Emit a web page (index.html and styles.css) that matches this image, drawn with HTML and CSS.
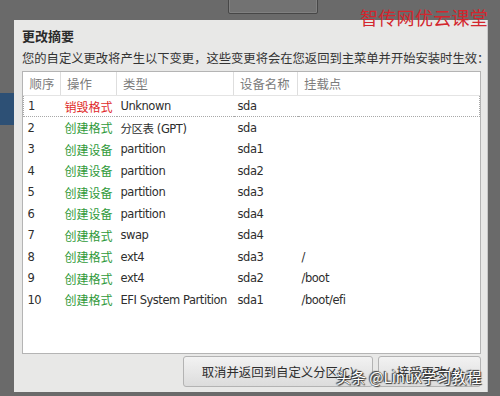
FILE: index.html
```html
<!DOCTYPE html>
<html>
   <head>
      <title>更改摘要</title>
      <link rel="stylesheet" href="styles.css">
   </head>
   <body>
   <div class="desk">
      <div class="stub"></div>
      <div class="side"></div>

      <div class="dialog">
         <h1 class="title">更改摘要</h1>
         <p class="desc">您的自定义更改将产生以下变更，这些变更将会在您返回到主菜单并开始安装时生效：</p>
         <div class="listbox">
            <table class="changes">
               <colgroup>
                  <col class="c-num"><col class="c-op"><col class="c-type"><col class="c-dev"><col>
               </colgroup>
               <thead>
                  <tr><th>顺序</th><th>操作</th><th>类型</th><th>设备名称</th><th class="last">挂载点</th></tr>
               </thead>
               <tbody>
                  <tr class="focus"><td>1</td><td class="del">销毁格式</td><td>Unknown</td><td>sda</td><td></td></tr>
                  <tr><td>2</td><td class="add">创建格式</td><td>分区表 (GPT)</td><td>sda</td><td></td></tr>
                  <tr><td>3</td><td class="add">创建设备</td><td>partition</td><td>sda1</td><td></td></tr>
                  <tr><td>4</td><td class="add">创建设备</td><td>partition</td><td>sda2</td><td></td></tr>
                  <tr><td>5</td><td class="add">创建设备</td><td>partition</td><td>sda3</td><td></td></tr>
                  <tr><td>6</td><td class="add">创建设备</td><td>partition</td><td>sda4</td><td></td></tr>
                  <tr><td>7</td><td class="add">创建格式</td><td>swap</td><td>sda4</td><td></td></tr>
                  <tr><td>8</td><td class="add">创建格式</td><td>ext4</td><td>sda3</td><td>/</td></tr>
                  <tr><td>9</td><td class="add">创建格式</td><td>ext4</td><td>sda2</td><td>/boot</td></tr>
                  <tr><td>10</td><td class="add">创建格式</td><td>EFI System Partition</td><td>sda1</td><td>/boot/efi</td></tr>
               </tbody>
            </table>
         </div>
         <div class="buttons">
            <button class="btn cancel">取消并返回到自定义分区(C)</button>
            <button class="btn accept">接受更改(A)</button>
         </div>
      </div>

      <div class="mark">智传网优云课堂</div>
      <div class="credit">头条 @Linux学习教程</div>
   </div>
   </body>
</html>
```

FILE: styles.css
```css
body { margin:0; background:#6b6b6b; }
.desk { position:relative; width:500px; height:396px; overflow:hidden;
        background:#6a6a6a; font-family:"DejaVu Sans","Noto Sans CJK SC",sans-serif; }

/* things behind the dialog */
.stub { position:absolute; left:228px; top:-4px; width:88px; height:16px;
        border:1px solid #474747; border-radius:2px; background:#727272;
        box-shadow:inset 0 0 0 1px #808080; }
.side { position:absolute; left:0; top:93px; width:14px; height:32px; background:#2d5075; }

/* the dialog window */
.dialog { position:absolute; left:14px; top:20px; width:474px; height:372px;
          box-sizing:border-box; padding:0 6px 0 8px; background:#e8e8e7;
          border-right:1px solid #c8c8c8; display:flex; flex-direction:column; }
.title { margin:7px 0 0; font-family:"Noto Sans CJK SC",sans-serif; font-size:13px;
         font-weight:bold; color:#2b2b2b; line-height:17px; }
.desc { margin:6px 0 0; font-family:"Noto Sans CJK SC",sans-serif; font-size:12.3px;
        color:#333; line-height:16px; white-space:nowrap; }

.listbox { margin-top:5px; height:283px; box-sizing:border-box; background:#fff;
           border:1px solid #b4b4b4; }
.changes { width:100%; border-collapse:collapse; table-layout:fixed; font-size:11.5px;
           letter-spacing:-0.45px; color:#2e2e2e; }
.c-num { width:37px; }
.c-op { width:56px; }
.c-type { width:117px; }
.c-dev { width:64px; }
.changes th { height:23px; padding:0 0 0 6px; text-align:left; font-weight:normal;
              font-family:"Noto Sans CJK SC",sans-serif; font-size:12.4px; letter-spacing:0;
              color:#7b7b7b; border-right:1px solid #dedede; border-bottom:1px solid #e4e4e4; }
.changes th.last { border-right:none; }
.changes td { height:21.5px; padding:0 0 0 4px; white-space:nowrap; overflow:hidden; }
.changes tr.focus td { height:20px; border-top:1px dotted #a8a8a8; border-bottom:1px dotted #a8a8a8; }
.changes tr.focus td:first-child { border-left:1px dotted #a8a8a8; }
.changes tr.focus td:last-child { border-right:1px dotted #a8a8a8; }
.del, .add { font-family:"Noto Sans CJK SC",sans-serif; font-size:12px; letter-spacing:0; }
.del { color:#e02a2a; }
.add { color:#2f9a3a; }

.buttons { display:flex; justify-content:flex-end; gap:5px; margin-top:2px; }
.btn { height:31px; box-sizing:border-box; border:1px solid #b3b3b3; border-radius:3px;
       background:linear-gradient(#f2f2f2,#dcdcdc); font-family:"Noto Sans CJK SC",sans-serif;
       font-size:12.4px; color:#2e2e2e; padding:0; }
.cancel { width:190px; }
.accept { width:103px; }

/* overlays */
.mark { position:absolute; left:360px; top:5px; font-family:"Noto Sans CJK SC",serif;
        font-size:18px; letter-spacing:0.3px; color:#d3262e; line-height:24px; }
.credit { position:absolute; left:336px; top:367px; font-family:"Noto Sans CJK SC",sans-serif;
          font-size:15px; color:#fff; line-height:20px;
          text-shadow:0 0 1px #222,1px 1px 1px #333,-1px -1px 1px #333; }
```
